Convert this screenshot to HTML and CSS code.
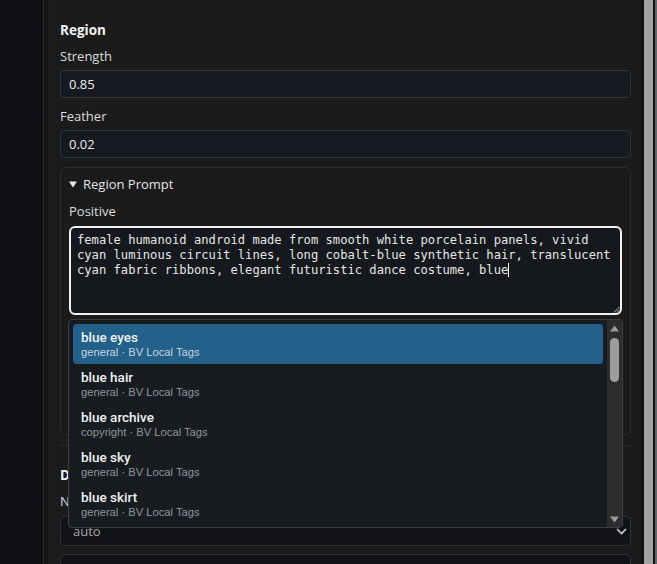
FILE: index.html
```html
<!DOCTYPE html>
<html lang="en">
<head>
<meta charset="utf-8">
<title>Region settings</title>
<link rel="stylesheet" href="styles.css">
</head>
<body>
<div class="app">
  <div class="gutter"></div>
  <div class="rail"></div>
  <aside class="panel">
    <div class="panel-scroll">
      <section class="group">
        <h3 class="group-title">Region</h3>
        <div class="field">
          <label class="field-label" for="strength">Strength</label>
          <input class="input" id="strength" type="text" value="0.85">
        </div>
        <div class="field">
          <label class="field-label" for="feather">Feather</label>
          <input class="input" id="feather" type="text" value="0.02">
        </div>
        <div class="fold">
          <div class="fold-summary">
            <svg class="fold-caret" width="8" height="7" viewBox="0 0 8 7"><path d="M0 0.5h8L4 6.5z" fill="#e6e6e6"/></svg>
            <span>Region Prompt</span>
          </div>
          <div class="field">
            <div class="field-label">Positive</div>
            <div class="prompt-wrap">
              <div class="prompt prompt-focus" role="textbox" aria-multiline="true">female humanoid android made from smooth white porcelain panels, vivid cyan luminous circuit lines, long cobalt-blue synthetic hair, translucent cyan fabric ribbons, elegant futuristic dance costume, blue<span class="caret"></span></div>
              <svg class="grip" width="8" height="8" viewBox="0 0 8 8"><path d="M7.5 2L2 7.5M7.5 5L5 7.5" stroke="#c4c4c4" stroke-width="1"/></svg>
              <div class="suggest" role="listbox">
                <ul class="suggest-list">
                  <li class="suggest-item active"><span class="tag">blue eyes</span><span class="meta">general · BV Local Tags</span></li>
                  <li class="suggest-item"><span class="tag">blue hair</span><span class="meta">general · BV Local Tags</span></li>
                  <li class="suggest-item"><span class="tag">blue archive</span><span class="meta">copyright · BV Local Tags</span></li>
                  <li class="suggest-item"><span class="tag">blue sky</span><span class="meta">general · BV Local Tags</span></li>
                  <li class="suggest-item"><span class="tag">blue skirt</span><span class="meta">general · BV Local Tags</span></li>
                  <li class="suggest-item"><span class="tag">blue background</span><span class="meta">general · BV Local Tags</span></li>
                  <li class="suggest-item"><span class="tag">blue flower</span><span class="meta">general · BV Local Tags</span></li>
                </ul>
                <div class="suggest-scroll">
                  <svg class="arrow" width="9" height="7" viewBox="0 0 9 7"><path d="M4.5 0.5L9 6.5H0z" fill="#9c9c9c"/></svg>
                  <div class="suggest-thumb"></div>
                  <svg class="arrow arrow-down" width="9" height="7" viewBox="0 0 9 7"><path d="M0 0.5h9L4.5 6.5z" fill="#9c9c9c"/></svg>
                </div>
              </div>
            </div>
          </div>
          <div class="field">
            <div class="field-label">Negative</div>
            <div class="prompt prompt-short" role="textbox" aria-multiline="true">lowres, blurry, extra fingers</div>
          </div>
        </div>
      </section>
      <section class="group">
        <h3 class="group-title">Details</h3>
        <div class="field">
          <div class="field-label">Noise source</div>
          <div class="select">
            <span>auto</span>
            <svg class="chevron" width="11" height="7" viewBox="0 0 11 7"><path d="M1 1l4.5 4.5L10 1" fill="none" stroke="#cfcfcf" stroke-width="1.6"/></svg>
          </div>
        </div>
        <div class="select select-tall"></div>
      </section>
    </div>
    <div class="scrollbar"><div class="scrollbar-thumb"></div></div>
    <div class="edge"></div>
  </aside>
</div>
</body>
</html>
```

FILE: styles.css
```css
* { box-sizing: border-box; }

html, body {
  margin: 0;
  height: 100%;
}

body {
  background: #0f1114;
  color: #dedede;
  font-family: "Open Sans", "Segoe UI", sans-serif;
  font-size: 13px;
  overflow: hidden;
}

.app {
  display: flex;
  height: 564px;
}

.gutter {
  width: 43px;
  background: #0f1114;
}

.rail {
  width: 6px;
  background: #161616;
  border-left: 1px solid #2a2a2a;
}

.panel {
  flex: 1;
  min-width: 0;
  display: flex;
  background: #1b1b1b;
  border-left: 1px solid #242424;
}

.panel-scroll {
  flex: 1;
  min-width: 0;
  overflow: hidden;
  padding: 0 10px;
}

.scrollbar {
  width: 14px;
  display: flex;
  background: #151515;
  padding: 0 2px 0 3px;
}

.scrollbar-thumb {
  flex: 1;
  background: #a3a3a3;
}

.edge {
  width: 2px;
  background: #5e6b6b;
}

/* settings groups */
.group {
  display: flex;
  flex-direction: column;
  gap: 8px;
  padding: 20px 0 10px;
  border-bottom: 1px solid #2a2a2a;
}

.group + .group {
  padding-top: 19px;
  border-bottom: 0;
}

.group-title {
  margin: 0 0 -2px;
  font-size: 13.5px;
  line-height: 20px;
  font-weight: 700;
  color: #f2f2f2;
}

.field {
  display: flex;
  flex-direction: column;
  gap: 4px;
}

.field-label {
  font-size: 13px;
  line-height: 20px;
  color: #dcdcdc;
}

.input {
  height: 28px;
  width: 100%;
  margin: 0;
  padding: 0 8px;
  background: #161a20;
  border: 1px solid #30343a;
  border-radius: 4px;
  color: #ececec;
  font-family: "Open Sans", "Segoe UI", sans-serif;
  font-size: 13px;
  outline: none;
}

/* collapsible prompt block */
.fold {
  margin-top: 1px;
  border: 1px solid #2c2c2c;
  border-radius: 6px;
  padding: 6px 8px 8px;
  display: flex;
  flex-direction: column;
  gap: 8px;
}

.fold-summary {
  display: flex;
  align-items: center;
  gap: 6px;
  height: 20px;
  margin-bottom: -1px;
  font-size: 13px;
  color: #e4e4e4;
}

.fold-caret {
  display: block;
  margin-top: 1px;
}

.fold .field {
  gap: 5px;
}

.prompt-wrap {
  position: relative;
}

.prompt {
  background: #15181c;
  border: 1px solid #30343a;
  border-radius: 6px;
  padding: 6px 7px;
  font-family: "DejaVu Sans Mono", "Liberation Mono", monospace;
  font-size: 12.15px;
  line-height: 15px;
  color: #e6e6e6;
  white-space: pre-wrap;
  overflow-wrap: break-word;
}

.prompt-focus {
  height: 89px;
  border: 2px solid #f2f2f2;
  padding: 5px 6px;
}

.prompt-short {
  height: 78px;
}

.caret {
  display: inline-block;
  width: 1px;
  height: 14px;
  background: #ffffff;
  vertical-align: -3px;
}

.grip {
  position: absolute;
  right: 2px;
  bottom: 2px;
}

/* tag suggestion popup */
.suggest {
  position: absolute;
  z-index: 5;
  top: calc(100% + 4px);
  left: -1px;
  right: -1px;
  height: 209px;
  display: flex;
  background: #181b20;
  border: 1px solid #3b3e43;
  border-radius: 4px;
  overflow: hidden;
  font-family: Roboto, "Liberation Sans", Arial, sans-serif;
}

.suggest-list {
  flex: 1;
  min-width: 0;
  list-style: none;
  margin: 0;
  padding: 4px 4px 0;
  overflow: hidden;
}

.suggest-item {
  height: 40px;
  padding: 6px 8px 5px;
  border-radius: 4px;
  display: flex;
  flex-direction: column;
}

.suggest-item.active {
  background: #23608a;
}

.tag {
  font-size: 13.5px;
  line-height: 15px;
  font-weight: 500;
  color: #eef1f4;
}

.meta {
  font-family: "Liberation Sans", Arial, sans-serif;
  font-size: 11.2px;
  line-height: 15px;
  color: #8d979f;
}

.suggest-item.active .meta {
  color: #c9d5df;
}

.suggest-scroll {
  width: 15px;
  background: #2c2c2c;
  display: flex;
  flex-direction: column;
  align-items: center;
  padding: 5px 0 4px;
}

.arrow {
  display: block;
}

.suggest-thumb {
  width: 9px;
  height: 44px;
  margin-top: 6px;
  border-radius: 5px;
  background: #9d9d9d;
}

.arrow-down {
  margin-top: auto;
}

/* select boxes */
.select {
  position: relative;
  height: 30px;
  flex: none;
  display: flex;
  align-items: center;
  padding: 0 12px;
  background: #111317;
  border: 1px solid #2e3238;
  border-radius: 5px;
  color: #a8a8a8;
  font-size: 13px;
}

.field .select {
  margin-top: 1px;
}

.select-tall {
  height: 40px;
}

.chevron {
  position: absolute;
  right: 3px;
  top: 11px;
}
```
